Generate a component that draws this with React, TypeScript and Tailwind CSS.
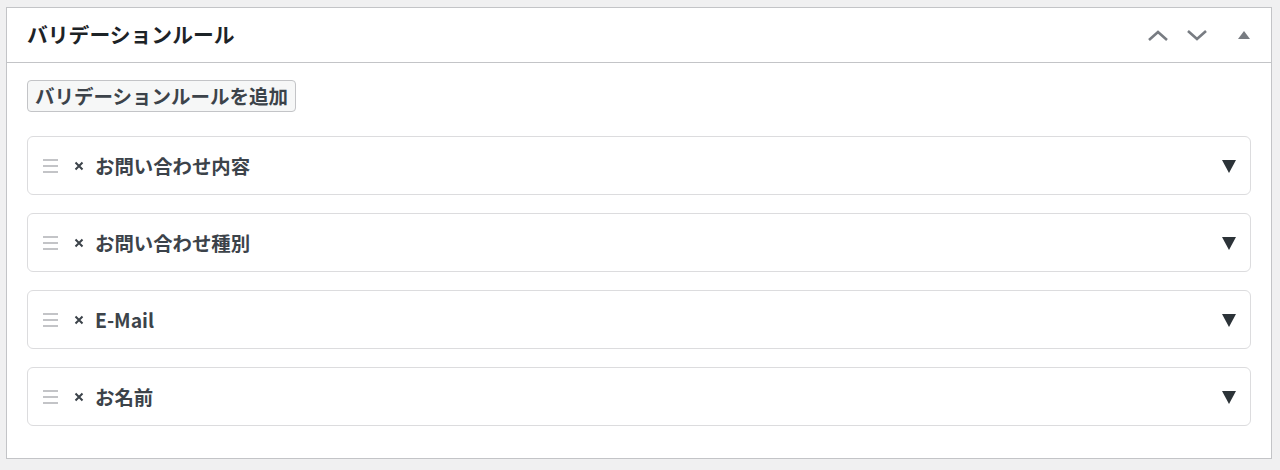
const font = { fontFamily: '"Noto Sans CJK JP", "Noto Sans", sans-serif' };

const rules = ['お問い合わせ内容', 'お問い合わせ種別', 'E-Mail', 'お名前'];

function DragHandle() {
  return (
    <span className="flex w-[15px] flex-col gap-[4px]">
      <span className="h-[2px] w-full bg-[#c3c4c7]" />
      <span className="h-[2px] w-full bg-[#c3c4c7]" />
      <span className="h-[2px] w-full bg-[#c3c4c7]" />
    </span>
  );
}

function RuleItem({ label }: { label: string }) {
  return (
    <div className="flex h-[59px] items-center rounded-[6px] border border-[#dcdcde] bg-white pl-[15px] pr-[14px]">
      <DragHandle />
      <svg className="ml-[16px]" width="10" height="10" viewBox="0 0 10 10">
        <path d="M1.5 1.5 L8.5 8.5 M8.5 1.5 L1.5 8.5" stroke="#3c434a" strokeWidth="2" />
      </svg>
      <span className="ml-[11px] text-[19.4px] font-bold text-[#3c434a]">{label}</span>
      <svg className="ml-auto" width="14" height="14" viewBox="0 0 14 14">
        <polygon points="0,1 14,1 7,14" fill="#2c3338" />
      </svg>
    </div>
  );
}

export default function App() {
  return (
    <div className="min-h-[470px] bg-[#f0f0f1] pl-[6px] pr-[8px] pt-[7px]" style={font}>
      <div className="border border-[#c3c4c7] bg-white">
        <div className="flex h-[55px] items-center border-b border-[#c3c4c7] pl-[20px] pr-[21px]">
          <h2 className="text-[20.8px] font-bold text-[#1d2327]">バリデーションルール</h2>
          <div className="ml-auto flex items-center">
            <svg width="22" height="14" viewBox="0 0 22 14">
              <polyline points="2,12 11,4 20,12" fill="none" stroke="#787c82" strokeWidth="2.6" />
            </svg>
            <svg className="ml-[17px]" width="22" height="14" viewBox="0 0 22 14">
              <polyline points="2,3 11,11 20,3" fill="none" stroke="#787c82" strokeWidth="2.6" />
            </svg>
            <svg className="ml-[30px]" width="12" height="10" viewBox="0 0 12 10">
              <polygon points="0,9 12,9 6,1" fill="#787c82" />
            </svg>
          </div>
        </div>
        <div className="flex flex-col px-[20px] pb-[32px] pt-[17px]">
          <div className="flex">
            <button className="flex h-[32px] items-center rounded-[4px] border border-[#c3c4c7] bg-[#f6f7f7] px-[7px] text-[19.5px] font-bold text-[#3c434a]">
              バリデーションルールを追加
            </button>
          </div>
          <div className="mt-[24px] flex flex-col gap-[18px]">
            {rules.map((r) => (
              <RuleItem key={r} label={r} />
            ))}
          </div>
        </div>
      </div>
    </div>
  );
}
